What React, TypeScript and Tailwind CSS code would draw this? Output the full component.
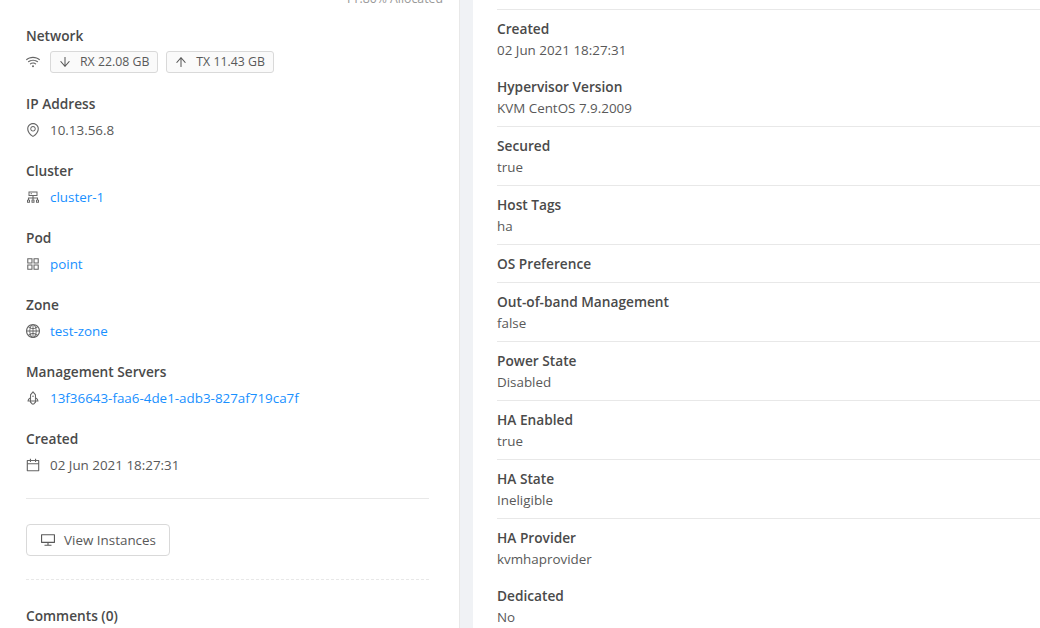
import React from 'react';
import {
  AiOutlineAppstore,
  AiOutlineArrowDown,
  AiOutlineArrowUp,
  AiOutlineCalendar,
  AiOutlineCluster,
  AiOutlineDesktop,
  AiOutlineEnvironment,
  AiOutlineGlobal,
  AiOutlineRocket,
  AiOutlineWifi,
} from 'react-icons/ai';

const Item: React.FC<{ label: string; icon: React.ReactNode; children: React.ReactNode; className?: string }> = ({ label, icon, children, className = 'h-[67px]' }) => (
  <div className={className}>
    <div className="h-5 text-[13.7px] leading-5 font-semibold text-[#4a4a4a]">{label}</div>
    <div className="mt-[5px] flex h-[22px] items-center">
      <span className="-ml-[1px] flex w-[25px] shrink-0 text-[16px] text-[#666]">{icon}</span>
      {children}
    </div>
  </div>
);

const Link: React.FC<{ children: React.ReactNode }> = ({ children }) => <a className="text-[#1890ff]">{children}</a>;

const Tag: React.FC<{ icon: React.ReactNode; children: React.ReactNode }> = ({ icon, children }) => (
  <span className="flex h-[22px] items-center rounded-[3px] border border-[#d9d9d9] bg-[#fafafa] pr-2 pl-[7px] text-[12.3px] text-[#595959]">
    <span className="mr-2 flex text-[14px]">{icon}</span>
    {children}
  </span>
);

const details: { label: string; value?: string; noBorder?: boolean }[] = [
  { label: 'Created', value: '02 Jun 2021 18:27:31' },
  { label: 'Hypervisor Version', value: 'KVM CentOS 7.9.2009', noBorder: true },
  { label: 'Secured', value: 'true' },
  { label: 'Host Tags', value: 'ha' },
  { label: 'OS Preference' },
  { label: 'Out-of-band Management', value: 'false' },
  { label: 'Power State', value: 'Disabled' },
  { label: 'HA Enabled', value: 'true' },
  { label: 'HA State', value: 'Ineligible' },
  { label: 'HA Provider', value: 'kvmhaprovider' },
  { label: 'Dedicated', value: 'No', noBorder: true },
];

export default function App() {
  return (
    <div className="flex h-[628px] w-[1040px] overflow-hidden bg-[#f0f2f5] font-['Open_Sans',sans-serif] text-[13.4px] text-[#595959]">
      {/* Left card */}
      <div className="relative h-full w-[460px] shrink-0 border-r border-[#e8e8e8] bg-white px-[26px] pt-[26px]">
        <div className="absolute -top-[10px] right-[16px] text-[12.3px] text-[#999]">Pr:80% Allocated</div>
        <Item label="Network" icon={<AiOutlineWifi />} className="h-[68px]">
          <div className="flex gap-2">
            <Tag icon={<AiOutlineArrowDown />}>RX 22.08 GB</Tag>
            <Tag icon={<AiOutlineArrowUp />}>TX 11.43 GB</Tag>
          </div>
        </Item>
        <Item label="IP Address" icon={<AiOutlineEnvironment />}>10.13.56.8</Item>
        <Item label="Cluster" icon={<AiOutlineCluster />}><Link>cluster-1</Link></Item>
        <Item label="Pod" icon={<AiOutlineAppstore />}><Link>point</Link></Item>
        <Item label="Zone" icon={<AiOutlineGlobal />}><Link>test-zone</Link></Item>
        <Item label="Management Servers" icon={<AiOutlineRocket />}>
          <Link>13f36643-faa6-4de1-adb3-827af719ca7f</Link>
        </Item>
        <Item label="Created" icon={<AiOutlineCalendar />}>02 Jun 2021 18:27:31</Item>
        <div className="mt-[2px] w-[403px] border-t border-[#e8e8e8]" />
        <button className="mt-[25px] flex h-8 w-[144px] items-center justify-center rounded border border-[#d9d9d9] bg-white text-[#595959]">
          <AiOutlineDesktop className="mr-2 text-[16px]" />
          View Instances
        </button>
        <div className="mt-[23px] w-[403px] border-t border-dashed border-[#e8e8e8]" />
        <div className="mt-[26px] text-[13.7px] leading-5 font-semibold text-[#4a4a4a]">Comments (0)</div>
      </div>
      {/* Right card */}
      <div className="ml-[13px] flex-1 bg-white pt-[9px] pl-[24px]">
        {details.map((d) => (
          <div key={d.label} className={d.noBorder ? 'pt-[9px] pb-[8px]' : 'border-t border-[#e8e8e8] pt-[9px] pb-[8px]'}>
            <div className="h-5 text-[13.7px] leading-5 font-semibold text-[#4a4a4a]">{d.label}</div>
            {d.value && <div className="mt-[1px] h-5 leading-5">{d.value}</div>}
          </div>
        ))}
      </div>
    </div>
  );
}
